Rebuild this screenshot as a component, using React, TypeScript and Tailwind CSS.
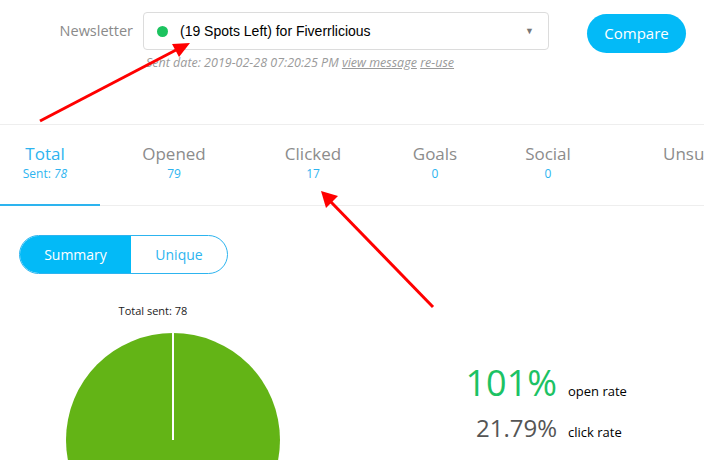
import React from "react";

const UI_FONT = "font-['Open_Sans','Noto_Sans',sans-serif]";

type Tab = { label: string; value: React.ReactNode; width: string; active?: boolean };

const TABS: Tab[] = [
  { label: "Total", value: <>Sent: <i>78</i></>, width: "w-[100px] pr-[10px]", active: true },
  { label: "Opened", value: "79", width: "w-[148px]" },
  { label: "Clicked", value: "17", width: "w-[130px]" },
  { label: "Goals", value: "0", width: "w-[114px]" },
  { label: "Social", value: "0", width: "w-[112px]" },
];

function Arrows() {
  return (
    <svg
      className="pointer-events-none absolute left-0 top-0"
      width="704"
      height="460"
      viewBox="0 0 704 460"
    >
      <line x1="40" y1="121" x2="176" y2="50" stroke="#ff0000" strokeWidth="3" />
      <polygon points="190,43 172,44 179,57" fill="#ff0000" />
      <line x1="433" y1="307" x2="331" y2="202" stroke="#ff0000" strokeWidth="3" />
      <polygon points="321,191 326,208 338,196" fill="#ff0000" />
    </svg>
  );
}

export default function App() {
  return (
    <div className={`relative h-[460px] w-[704px] overflow-hidden bg-white ${UI_FONT}`}>
      {/* header */}
      <div className="flex items-start pt-[12px]">
        <div className="h-[38px] w-[143px] pr-[10px] text-right text-[14.5px] leading-[38px] text-[#8a8a8a]">
          Newsletter
        </div>
        <div className="flex flex-col">
          <div className="flex h-[38px] w-[406px] items-center rounded-[4px] border border-[#dcdcdc] pl-[13px] pr-[14px]">
            <span className="h-[11px] w-[11px] rounded-full bg-[#1cc35f]" />
            <span className="ml-[12px] font-['Liberation_Sans',Arial,sans-serif] text-[14px] text-black">
              (19 Spots Left) for Fiverrlicious
            </span>
            <span className="ml-auto text-[9px] text-[#777]">▼</span>
          </div>
          <div className="mt-[4px] pl-[3px] text-[12.5px] italic text-[#9a9a9a]">
            Sent date: 2019-02-28 07:20:25 PM <span className="underline">view message</span>{" "}
            <span className="underline">re-use</span>
          </div>
        </div>
        <button className="ml-[38px] mt-[2px] h-[39px] w-[99px] rounded-full bg-[#03baf7] text-[15px] text-white">
          Compare
        </button>
      </div>

      {/* tabs */}
      <div className="mt-[51px] flex h-[82px] border-y border-[#eeeeee]">
        {TABS.map((t) => (
          <div
            key={t.label}
            className={`${t.width} flex shrink-0 flex-col items-center pt-[18px] ${
              t.active ? "border-b-2 border-[#2db4ef] -mb-px" : ""
            }`}
          >
            <span className={`text-[17px] leading-[22px] ${t.active ? "text-[#2db4ef]" : "text-[#8c8c8c]"}`}>
              {t.label}
            </span>
            <span className="text-[12px] leading-[18px] text-[#2db4ef]">{t.value}</span>
          </div>
        ))}
        <div className="shrink-0 whitespace-nowrap pl-[59px] pt-[18px] text-[17px] leading-[22px] text-[#8c8c8c]">
          Unsubscribed
        </div>
      </div>

      {/* toggle */}
      <div className="ml-[19px] mt-[29px] flex h-[39px] w-[209px] overflow-hidden rounded-full border border-[#2db4ef] text-[14px]">
        <div className="flex w-[111px] items-center justify-center bg-[#03baf7] text-white">Summary</div>
        <div className="flex flex-1 items-center justify-center text-[#2db4ef]">Unique</div>
      </div>

      {/* chart + stats */}
      <div className="flex items-start">
        <div className="w-[400px] shrink-0">
          <div className="mt-[30px] w-[306px] text-center text-[11px] leading-[14px] text-[#222]">
            Total sent: 78
          </div>
          <svg width="400" height="220" viewBox="0 0 400 220" className="mt-[15px] block">
            <circle cx="173" cy="107" r="107" fill="#63b416" />
            <line x1="173" y1="0" x2="173" y2="107" stroke="#ffffff" strokeWidth="2" />
          </svg>
        </div>
        <div className="mt-[83px] grid grid-cols-[157px_auto] items-baseline gap-x-[11px] text-[13px] text-black">
          <span className="text-right text-[36px] leading-[51px] text-[#1cc264]">101%</span>
          <span>open rate</span>
          <span className="text-right text-[24px] leading-[40px] text-[#555]">21.79%</span>
          <span>click rate</span>
          <span className="text-right text-[24px] leading-[40px] text-[#555]">0</span>
          <span>goals</span>
        </div>
      </div>

      <Arrows />
    </div>
  );
}
